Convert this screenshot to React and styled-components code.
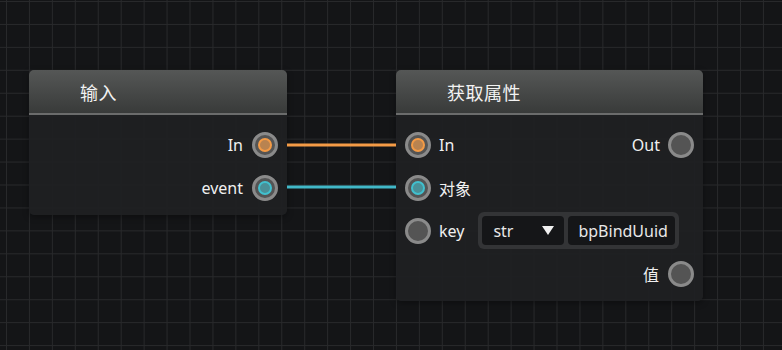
import styled, { createGlobalStyle } from "styled-components";

const GlobalStyle = createGlobalStyle`
  html, body {
    margin: 0;
    padding: 0;
    background: #141517;
  }
  body {
    font-family: "Noto Sans", "Noto Sans CJK SC", sans-serif;
  }
`;

const Canvas = styled.div`
  position: relative;
  width: 782px;
  height: 350px;
  overflow: hidden;
  background-color: #141517;
  background-image:
    linear-gradient(to right, #28292b 1px, transparent 1px),
    linear-gradient(to bottom, #28292b 1px, transparent 1px);
  background-size: 22.95px 22.95px;
  background-position: 6px 1px;
`;

const Wires = styled.svg`
  position: absolute;
  left: 0;
  top: 0;
`;

const Node = styled.div`
  position: absolute;
  left: ${(p) => p.x}px;
  top: ${(p) => p.y}px;
  width: ${(p) => p.w}px;
  border-radius: 5px;
  background: rgba(31, 32, 34, 0.93);
  box-shadow: 0 2px 6px rgba(0, 0, 0, 0.35);
  overflow: hidden;
`;

const Header = styled.div`
  height: 43px;
  display: flex;
  align-items: center;
  padding-left: ${(p) => p.indent}px;
  background: linear-gradient(to bottom, rgba(88, 90, 89, 0.95), rgba(58, 60, 59, 0.95));
  border-bottom: 2px solid #6b6c6c;
  color: #f2f2f2;
  font-size: 18px;
  letter-spacing: 0.5px;
`;

const Body = styled.div`
  padding: 8px 9px 6px;
  display: flex;
  flex-direction: column;
`;

const Row = styled.div`
  height: 43px;
  display: flex;
  align-items: center;
  justify-content: ${(p) => (p.right ? "flex-end" : "space-between")};
  gap: 9px;
`;

const Side = styled.div`
  display: flex;
  align-items: center;
  gap: 8px;
`;

const Label = styled.span`
  color: #f0f0f0;
  font-size: 16px;
`;

const Pin = styled.div`
  width: 26px;
  height: 26px;
  box-sizing: border-box;
  border-radius: 50%;
  border: 3px solid #8a8a8a;
  background: #545454;
  display: flex;
  align-items: center;
  justify-content: center;
  flex-shrink: 0;
`;

const PinDot = styled.div`
  width: 14px;
  height: 14px;
  box-sizing: border-box;
  border-radius: 50%;
  border: 2px solid ${(p) => p.ring};
  background: ${(p) => p.fill};
`;

const Field = styled.div`
  margin-left: 6px;
  display: flex;
  gap: 4px;
  padding: 4px;
  height: 37px;
  box-sizing: border-box;
  border-radius: 6px;
  background: #333436;
`;

const Select = styled.div`
  width: 82px;
  display: flex;
  align-items: center;
  justify-content: space-between;
  padding: 0 10px 0 11px;
  box-sizing: border-box;
  border-radius: 4px;
  background: #151618;
  color: #e8e8e8;
  font-size: 16px;
`;

const Arrow = styled.span`
  width: 0;
  height: 0;
  border-left: 6px solid transparent;
  border-right: 6px solid transparent;
  border-top: 9px solid #f0f0f0;
`;

const TextBox = styled.div`
  width: 107px;
  display: flex;
  align-items: center;
  padding-left: 10px;
  box-sizing: border-box;
  border-radius: 4px;
  background: #151618;
  color: #e8e8e8;
  font-size: 16px;
`;

const ORANGE = { ring: "#f49b46", fill: "#b98350" };
const CYAN = { ring: "#41c0ce", fill: "#4a9098" };

function ColorPin({ c }) {
  return (
    <Pin>{c && <PinDot ring={c.ring} fill={c.fill} />}</Pin>
  );
}

export default function App() {
  return (
    <>
      <GlobalStyle />
      <Canvas>
        <Node x={29} y={70} w={258}>
          <Header indent={51}>输入</Header>
          <Body>
            <Row right>
              <Label>In</Label>
              <ColorPin c={ORANGE} />
            </Row>
            <Row right>
              <Label>event</Label>
              <ColorPin c={CYAN} />
            </Row>
          </Body>
        </Node>

        <Node x={396} y={70} w={307}>
          <Header indent={51}>获取属性</Header>
          <Body>
            <Row>
              <Side>
                <ColorPin c={ORANGE} />
                <Label>In</Label>
              </Side>
              <Side>
                <Label>Out</Label>
                <ColorPin />
              </Side>
            </Row>
            <Row>
              <Side>
                <ColorPin c={CYAN} />
                <Label>对象</Label>
              </Side>
            </Row>
            <Row>
              <Side>
                <ColorPin />
                <Label>key</Label>
                <Field>
                  <Select>
                    <span>str</span>
                    <Arrow />
                  </Select>
                  <TextBox>bpBindUuid</TextBox>
                </Field>
              </Side>
            </Row>
            <Row right>
              <Label>值</Label>
              <ColorPin />
            </Row>
          </Body>
        </Node>

        <Wires width={782} height={350}>
          <line x1={287} y1={145} x2={396} y2={145} stroke="#f49b46" strokeWidth={3} />
          <line x1={287} y1={187} x2={396} y2={187} stroke="#41b8c8" strokeWidth={3} />
        </Wires>
      </Canvas>
    </>
  );
}
